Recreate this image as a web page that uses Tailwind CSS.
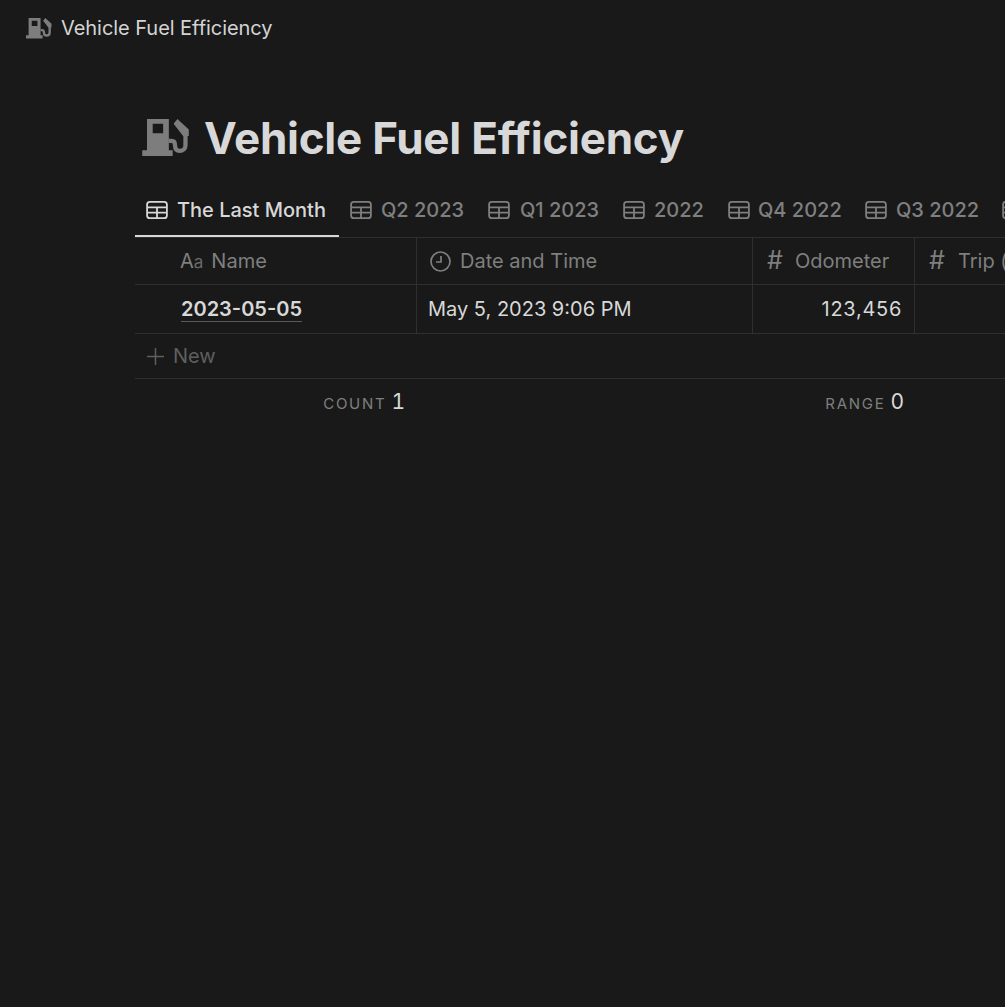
<!DOCTYPE html>
<html lang="en">
<head>
  <meta charset="UTF-8" />
  <title>Vehicle Fuel Efficiency</title>
  <script src="https://cdn.jsdelivr.net/npm/@tailwindcss/browser@4"></script>
</head>
<body class="bg-[#191919] font-['Inter',sans-serif] overflow-hidden h-[1007px] w-[1005px]">
  <svg class="hidden">
    <symbol id="pump" viewBox="0 0 50 40">
      <path fill="currentColor" fill-rule="evenodd" d="M5 0h23v33h4v6H0v-6h5zM11 5v10h11V5z"/>
      <path fill="none" stroke="currentColor" stroke-width="4.500" d="M28 23h3c3 0 3.500 2 3.500 4.500 0 4 2 6 5 6s6-2 6-6V14l-6-8"/>
      <path fill="currentColor" d="M37 0l12 11v7h-6l-10-13z"/>
    </symbol>
    <symbol id="tbl" viewBox="0 0 24 20">
      <rect x="1" y="1" width="22" height="18" rx="3" fill="none" stroke="currentColor" stroke-width="2"/>
      <path d="M1 7h22M1 13h22M12 7v12" fill="none" stroke="currentColor" stroke-width="2"/>
    </symbol>
  </svg>

  <div class="h-[56px] pl-[26px] flex items-center gap-[9px]">
    <svg class="w-[26px] h-[21px] text-[#7d7d7d]"><use href="#pump"/></svg>
    <span class="text-[20px] tracking-[-0.05px] text-[#d4d4d4]">Vehicle Fuel Efficiency</span>
  </div>

  <div class="pl-[135px] mt-[55px]">
    <div class="flex items-center h-[54px] pl-[7px] gap-[14px]">
      <svg class="w-[48px] h-[38px] text-[#7d7d7d]"><use href="#pump"/></svg>
      <h1 class="text-[44px] leading-none font-bold tracking-[-0.25px] text-[#d8d8d8]">Vehicle Fuel Efficiency</h1>
    </div>

    <div class="flex h-[51px] mt-[21px] text-[20px] font-medium text-[#7f7f7f] whitespace-nowrap w-[870px] overflow-hidden">
      <div class="w-[204px] border-b-2 border-[#d8d8d8] flex items-center pb-[2px] pl-[11px] gap-[9px] text-[#d8d8d8] shrink-0">
        <svg class="w-[22px] h-[18px]"><use href="#tbl"/></svg>The Last Month
      </div>
      <div class="flex items-center pb-[4px] pl-[11px] gap-[9px] shrink-0 w-[137px]"><svg class="w-[22px] h-[18px]"><use href="#tbl"/></svg>Q2 2023</div>
      <div class="flex items-center pb-[4px] pl-[12px] gap-[10px] shrink-0 w-[136px]"><svg class="w-[22px] h-[18px]"><use href="#tbl"/></svg>Q1 2023</div>
      <div class="flex items-center pb-[4px] pl-[11px] gap-[9px] shrink-0 w-[104px]"><svg class="w-[22px] h-[18px]"><use href="#tbl"/></svg>2022</div>
      <div class="flex items-center pb-[4px] pl-[12px] gap-[8px] shrink-0 w-[137px]"><svg class="w-[22px] h-[18px]"><use href="#tbl"/></svg>Q4 2022</div>
      <div class="flex items-center pb-[4px] pl-[12px] gap-[9px] shrink-0 w-[137px]"><svg class="w-[22px] h-[18px]"><use href="#tbl"/></svg>Q3 2022</div>
      <div class="flex items-center pb-[4px] pl-[12px] gap-[8px] shrink-0"><svg class="w-[22px] h-[18px]"><use href="#tbl"/></svg>Q2 2022</div>
    </div>

    <div class="w-[870px] text-[20px]">
      <div class="flex h-[48px] border-t border-b border-[#2f2f2f] text-[#7f7f7f] whitespace-nowrap overflow-hidden">
        <div class="w-[282px] shrink-0 border-r border-[#2f2f2f] flex items-center pl-[45px]">
          <span class="mr-[8px]">A<span class="text-[17px] text-[#6a6a6a]">a</span></span>Name
        </div>
        <div class="w-[336px] shrink-0 border-r border-[#2f2f2f] flex items-center pl-[13px] gap-[9px]">
          <svg class="w-[21px] h-[21px]" viewBox="0 0 21 21" fill="none" stroke="currentColor" stroke-width="1.700"><circle cx="10.500" cy="10.500" r="9.500"/><path d="M11 5v6H6"/></svg>Date and Time
        </div>
        <div class="w-[162px] shrink-0 border-r border-[#2f2f2f] flex items-center pl-[14px]">
          <span class="text-[25px] w-[28px]">#</span>Odometer
        </div>
        <div class="shrink-0 flex items-center pl-[14px]">
          <span class="text-[25px] w-[29px]">#</span>Trip (mi)
        </div>
      </div>
      <div class="flex h-[49px] border-b border-[#2f2f2f] text-[#d8d8d8]">
        <div class="w-[282px] shrink-0 border-r border-[#2f2f2f] flex items-center pl-[46px]">
          <span class="font-semibold border-b border-[#5a5a5a] leading-[24px]">2023-05-05</span>
        </div>
        <div class="w-[336px] shrink-0 border-r border-[#2f2f2f] flex items-center pl-[11px]">May 5, 2023 9:06 PM</div>
        <div class="w-[162px] shrink-0 border-r border-[#2f2f2f] flex items-center justify-end pr-[12px] tracking-[0.7px]">123,456</div>
      </div>
      <div class="flex items-center h-[45px] border-b border-[#2f2f2f] pl-[12px] gap-[9px] text-[#5f5f5f]">
        <svg class="w-[17px] h-[17px]" viewBox="0 0 17 17" fill="none" stroke="currentColor" stroke-width="1.500"><path d="M8.500 0v17M0 8.500h17"/></svg>New
      </div>
      <div class="flex h-[46px] items-center text-[#d8d8d8] text-[21px] tabular-nums">
        <div class="w-[282px] shrink-0 flex items-baseline justify-end pr-[12px] gap-[5px]">
          <span class="text-[15px] tracking-[1.700px] text-[#7f7f7f]">COUNT</span>1
        </div>
        <div class="w-[498px] shrink-0 flex items-baseline justify-end pr-[11px] gap-[5px]">
          <span class="text-[15px] tracking-[1.700px] text-[#7f7f7f]">RANGE</span>0
        </div>
      </div>
    </div>
  </div>
</body>
</html>
